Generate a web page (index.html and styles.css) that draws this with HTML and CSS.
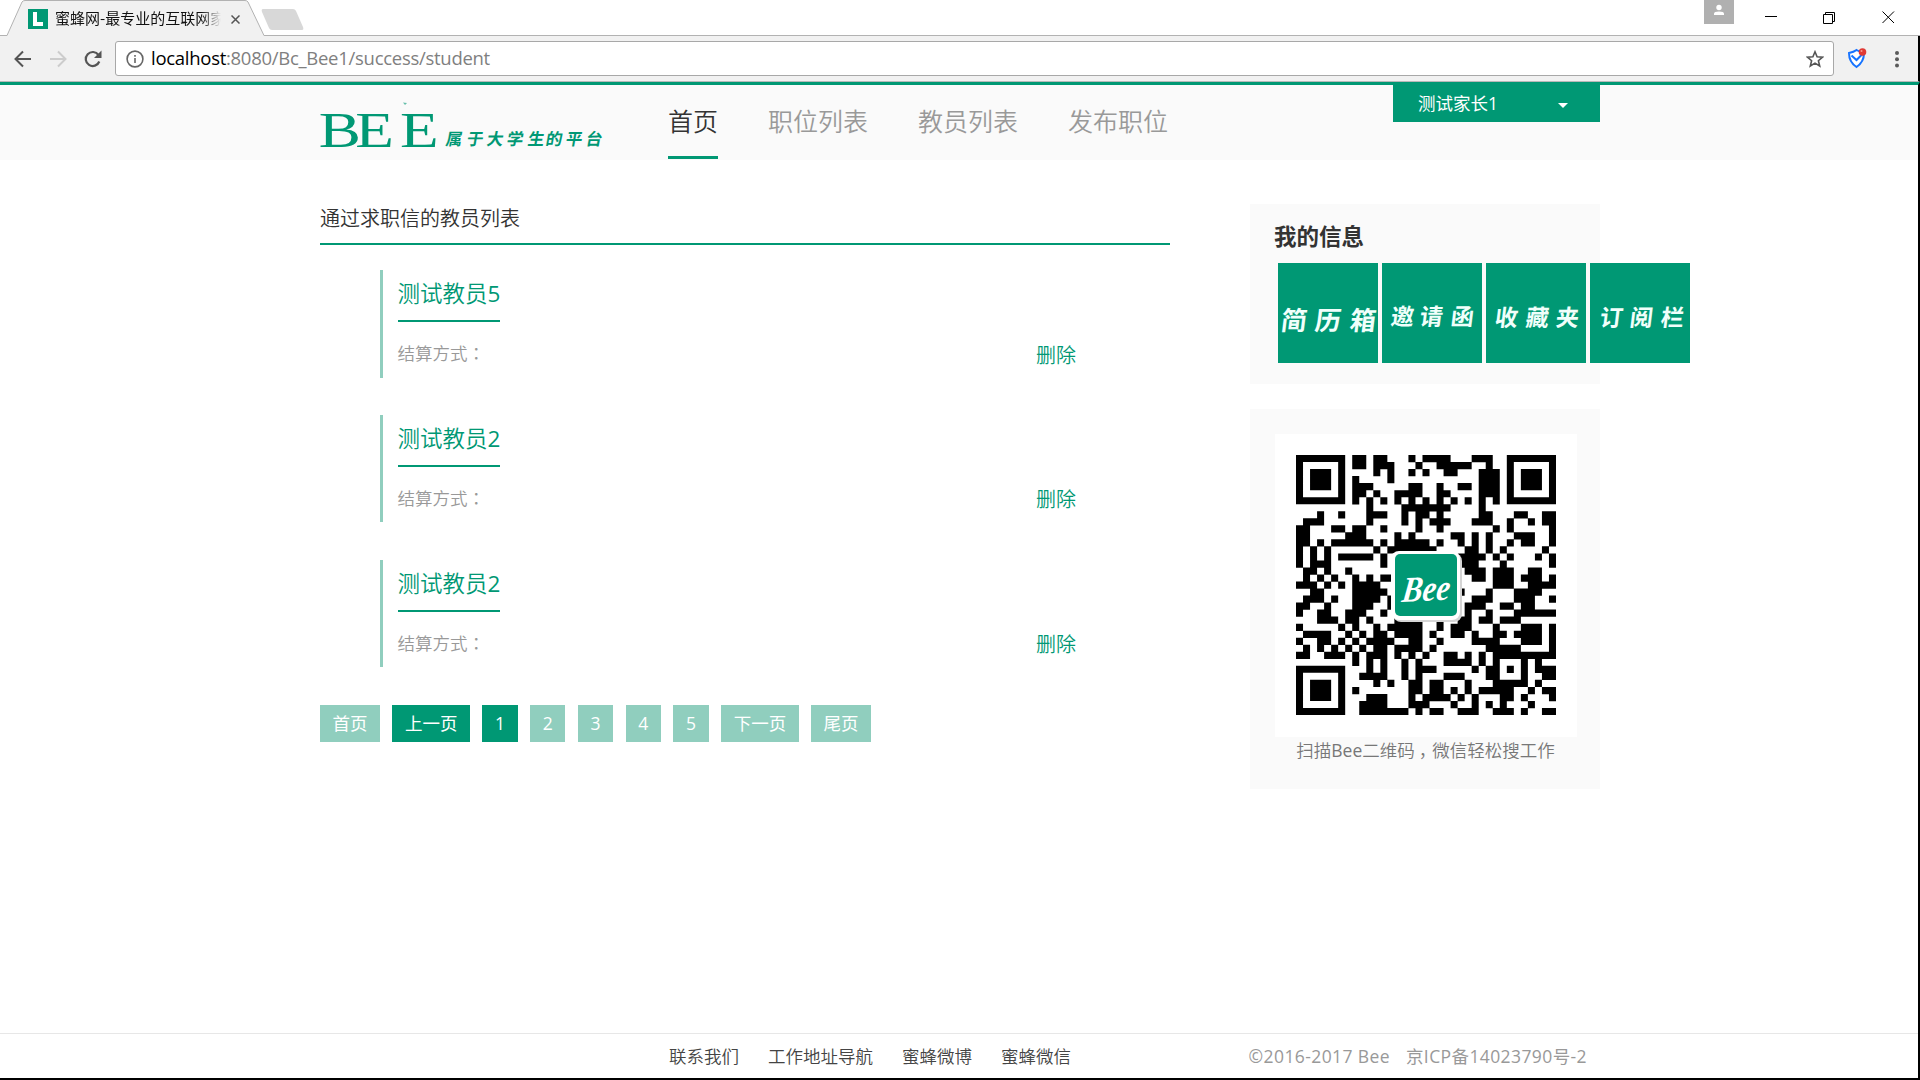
FILE: index.html
```html
<!DOCTYPE html>
<html lang="zh-CN">
<head>
<meta charset="utf-8">
<title>蜜蜂网</title>
<link rel="stylesheet" href="styles.css">
</head>
<body>
<div class="window">
  <div class="tabstrip">
    <svg class="tab-shape" width="320" height="36" viewBox="0 0 320 36">
      <path d="M0 36V35.5H7L22 2Q23 .5 25 .5H245Q247 .5 248 2L264 35.500H320V36Z" fill="#f1f1f1"/>
      <path d="M0 35.500H7L22 2Q23 .5 25 .5H245Q247 .5 248 2L264 35.500H320" fill="none" stroke="#b2b2b2"/>
      <path d="M263 9H293Q295 9 296 11L303 27Q304 30 302 30H272Q270 30 269 28L262 12Q261 9 263 9Z" fill="#d8d8d8"/>
    </svg>
    <svg class="favicon" width="20" height="20"><rect width="20" height="20" fill="#009874"/><path d="M5 3H9V13H15V17H5Z" fill="#fff"/></svg>
    <span class="tab-title">蜜蜂网-最专业的互联网家</span>
    <svg class="tab-close" width="9" height="9"><path d="M.5 .5L8.500 8.500M8.500 .5L.5 8.500" stroke="#555" stroke-width="1.500"/></svg>
    <svg class="profile" width="30" height="24"><rect width="30" height="24" fill="#b0b0b0"/><circle cx="15" cy="7.500" r="2.700" fill="#fff"/><path d="M10 15V13.500Q10 11.500 15 11.500T20 13.500V15Z" fill="#fff"/></svg>
    <svg class="controls" width="130" height="14" fill="none" stroke="#000">
      <path d="M0 5.500H12M58.500 3.500H67.500V12.500H58.500ZM60.500 3V1.500H69.500V10.500H68M117.500 .5L129 12M129 .5L117.500 12"/>
    </svg>
  </div>
  <div class="toolbar">
    <svg class="nav-icons" width="90" height="20" fill="none" stroke-width="2">
      <path d="M17 10H2M9 2.500L1.500 10L9 17.500" stroke="#555"/>
      <path d="M36 10H51M44 2.500L51.500 10L44 17.500" stroke="#ccc"/>
      <path d="M84.500 6A7 7 0 1 0 85.300 12.500" stroke="#555" stroke-width="2.200"/>
      <path d="M87.500 1.500V9H80Z" fill="#555"/>
    </svg>
    <div class="omnibox">
      <svg width="18" height="18" fill="none" stroke="#666" stroke-width="1.600"><circle cx="9" cy="9" r="7.900"/><path d="M9 8V13M9 5V6.700"/></svg>
      <span class="url"><b>localhost</b>:8080/Bc_Bee1/success/student</span>
      <svg class="star" width="18" height="18" fill="none" stroke="#555" stroke-width="1.600"><path d="M9 1.800L11.100 6.700L16.500 7.200L12.400 10.700L13.700 16L9 13.100L4.300 16L5.600 10.700L1.500 7.200L6.900 6.700Z"/></svg>
    </div>
    <svg class="shield" width="20" height="21"><path d="M2 5Q7 4 9.500 2Q13 4 17 5Q17 14 9.500 19Q2 14 2 5Z" fill="#fff" stroke="#1673ff" stroke-width="2"/><path d="M4.500 7.500L9.500 12L15 6.500" fill="none" stroke="#1673ff" stroke-width="2"/><circle cx="15.500" cy="4" r="3.800" fill="#e03a35"/><circle cx="14.500" cy="3" r="1" fill="#f59a90"/></svg>
    <svg class="dots" width="4" height="18" fill="#5a5a5a"><circle cx="2" cy="3" r="2"/><circle cx="2" cy="9.300" r="2"/><circle cx="2" cy="15.600" r="2"/></svg>
  </div>

  <div class="page">
    <header class="header">
      <div class="container header-row">
        <svg class="logo" width="285" height="60" fill="#009874">
          <text class="logo-latin" transform="scale(1.24 1)" x="-1 28.500 64.500" y="49">BEE</text>
          <path d="M83 4.500L87 5L85 7Z" opacity=".6"/>
          <text class="logo-cn" transform="translate(125 47) skewX(-10)" x="0 21 41 61 82 100 120 140" y="0">属于大学生的平台</text>
        </svg>
        <nav class="nav">
          <a class="active">首页</a><a>职位列表</a><a>教员列表</a><a>发布职位</a>
        </nav>
        <div class="user"><span>测试家长1</span><i class="caret"></i></div>
      </div>
    </header>

    <div class="container columns">
      <main class="main">
        <h2 class="list-title">通过求职信的教员列表</h2>
        <ul class="list">
          <li><div class="name"><a>测试教员<b>5</b></a></div><div class="meta"><span>结算方式<i class="punct" lang="zh-TW">：</i></span><a>删除</a></div></li>
          <li><div class="name"><a>测试教员<b>2</b></a></div><div class="meta"><span>结算方式<i class="punct" lang="zh-TW">：</i></span><a>删除</a></div></li>
          <li><div class="name"><a>测试教员<b>2</b></a></div><div class="meta"><span>结算方式<i class="punct" lang="zh-TW">：</i></span><a>删除</a></div></li>
        </ul>
        <div class="pager">
          <a class="w2">首页</a><a class="w3 on">上一页</a><a class="on">1</a><a>2</a><a>3</a><a>4</a><a>5</a><a class="w3">下一页</a><a class="w2">尾页</a>
        </div>
      </main>
      <aside class="side">
        <section class="card info">
          <h3>我的信息</h3>
          <div class="tiles">
            <svg width="100" height="100"><text class="brush big" transform="translate(2 67) skewX(-7)" x="0 34 69" y="0">简历箱</text></svg>
            <svg width="100" height="100"><text class="brush" transform="translate(8 62) skewX(-7)" x="0 29 60" y="0">邀请函</text></svg>
            <svg width="100" height="100"><text class="brush" transform="translate(8 63) skewX(-7)" x="0 31 61" y="0">收藏夹</text></svg>
            <svg width="100" height="100"><text class="brush" transform="translate(9 63) skewX(-7)" x="0 30 61" y="0">订阅栏</text></svg>
          </div>
        </section>
        <section class="card qr-card">
          <div class="qr">
            <svg width="260" height="260" viewBox="0 0 260 260">
              <path id="modules" transform="scale(7.027)"/>
              <rect x="97" y="98" width="69" height="69" rx="8" fill="#d5d5d5"/>
              <rect x="95" y="96" width="69" height="69" rx="8" fill="#fff"/>
              <rect x="99" y="99" width="62" height="62" rx="5" fill="#009874"/>
              <text class="qr-bee" transform="translate(105 147) rotate(-3) skewX(-10)" textLength="48" lengthAdjust="spacingAndGlyphs">Bee</text>
            </svg>
          </div>
          <p>扫描<b>Bee</b>二维码<i class="comma">，</i>微信轻松搜工作</p>
        </section>
      </aside>
    </div>

    <footer class="footer">
      <div class="container foot-row">
        <a>联系我们</a><a>工作地址导航</a><a>蜜蜂微博</a><a>蜜蜂微信</a>
        <span class="copy"><span>©2016-2017 Bee</span><span>京ICP备14023790号-2</span></span>
      </div>
    </footer>
  </div>
  <div class="taskbar"></div>
</div>
<script src="qr.js"></script>
</body>
</html>
```
FILE: styles.css
```css
* { box-sizing: border-box; margin: 0; padding: 0; }
body { width: 1920px; height: 1080px; overflow: hidden; background: #fff; font-family: "Open Sans", "Noto Sans CJK SC", sans-serif; font-weight: 350; color: #333; }
svg { display: block; flex: none; }
b { font-weight: 400; }
.window { display: flex; flex-direction: column; height: 1080px; }
.punct { font-style: normal; font-family: "Noto Sans CJK TC", sans-serif; }
.comma { font-style: normal; padding-left: 4px; margin-right: -4px; }

.tabstrip { position: relative; display: flex; height: 36px; border-bottom: 1px solid #b2b2b2; padding-left: 28px; }
.tab-shape { position: absolute; left: 0; top: 0; }
.favicon { position: relative; margin-top: 9px; }
.tab-title { position: relative; margin-left: 7px; width: 166px; overflow: hidden; white-space: nowrap; font-size: 15px; line-height: 35px; font-weight: 400; color: #111; font-family: "Noto Sans CJK SC", sans-serif; -webkit-mask-image: linear-gradient(90deg, #000 88%, transparent); mask-image: linear-gradient(90deg, #000 88%, transparent); }
.tab-close { position: relative; margin: 15px 0 0 10px; }
.profile { margin-left: auto; }
.controls { margin: 11px 25px 0 31px; }

.toolbar { display: flex; align-items: center; height: 46px; background: #f1f1f1; border-bottom: 1px solid #b9b9b9; padding-left: 14px; border-right: 2px solid #000; }
.nav-icons { margin-right: 11px; }
.omnibox { display: flex; align-items: center; width: 1719px; height: 35px; padding: 0 9px 0 10px; background: #fff; border: 1px solid #a8a8a8; border-radius: 3px; }
.url { margin-left: 7px; padding-bottom: 1px; font: 400 18.500px "Open Sans", sans-serif; line-height: 30px; color: #808080; letter-spacing: -.28px; }
.url b { color: #000; }
.star { margin-left: auto; }
.shield { margin-left: 13px; }
.dots { margin-left: 28px; }

.page { flex: 1; display: flex; flex-direction: column; border-top: 3px solid #009874; border-right: 2px solid #000; background: #fff; }
.container { width: 1280px; margin-left: 320px; display: flex; }
.header { height: 75px; background: #fafafa; }
.logo { margin-top: 13px; overflow: visible; }
.logo-latin { font: 400 51px "Liberation Serif", serif; }
.logo-cn { font: 700 16.500px "Noto Sans CJK SC", sans-serif; }
.nav { display: flex; gap: 50px; margin-left: 63px; height: 74px; }
.nav a { font-size: 25px; line-height: 72px; height: 74px; color: #999; white-space: nowrap; }
.nav .active { color: #333; border-bottom: 3px solid #009874; }
.user { display: flex; align-items: center; margin-left: auto; width: 207px; height: 37px; padding: 0 32px 0 25px; background: #009874; color: #fff; font-size: 17.500px; font-weight: 400; justify-content: space-between; }
.user span { padding-bottom: 2px; }
.caret { border: 5px solid transparent; border-top-color: #fff; border-bottom: 0; margin-top: 4px; }

.columns { justify-content: space-between; flex: 1; }
.main { width: 850px; padding-top: 38px; }
.list-title { height: 47px; border-bottom: 2px solid #009874; font-size: 20px; line-height: 41px; font-weight: 350; }
.list { list-style: none; margin: 25px 0 0 60px; }
.list li { height: 107.500px; margin-bottom: 37.400px; padding-left: 14.500px; border-left: 3px solid #90cebe; }
.name { height: 52px; display: flex; }
.name a { height: 52px; border-bottom: 2px solid #009874; font-size: 22.500px; line-height: 48px; color: #009874; }
.meta { display: flex; align-items: center; height: 64px; }
.meta span { width: 638.500px; padding-bottom: 3px; font-size: 17.500px; color: #999; }
.meta a { font-size: 20px; color: #009874; }
.pager { display: flex; gap: 12.400px; }
.pager a { width: 35.400px; height: 37px; line-height: 36px; text-align: center; background: #90cebe; color: #fff; font-size: 17.500px; font-weight: 400; }
.pager .w2 { width: 60px; }
.pager .w3 { width: 77.500px; }
.pager .on { background: #009874; }

.side { width: 350px; padding-top: 44px; }
.card { background: #fafafa; }
.info { height: 180px; padding: 16px 0 0 24px; }
.info h3 { font-size: 22.500px; line-height: 34px; font-weight: 700; }
.tiles { display: flex; gap: 4px; margin: 9px 0 0 4px; }
.tiles svg { background: #009874; }
.brush { font: 700 23px "Noto Sans CJK SC", sans-serif; fill: #f0fffb; }
.big { font-size: 26px; }
.qr-card { height: 380px; margin-top: 25px; padding: 25px 23px 0 25px; }
.qr { width: 302px; height: 303px; padding: 21px; background: #fff; }
.qr-bee { font: italic 700 36px "Liberation Serif", serif; fill: #fff; }
.qr-card p { margin-left: -1px; text-align: center; font-size: 17.500px; line-height: 26px; color: #777; white-space: nowrap; }

.footer { height: 45px; border-top: 1px solid #e7e7e7; font-size: 17.500px; line-height: 44px; }
.foot-row { padding-left: 349px; gap: 29px; color: #444; white-space: nowrap; }
.copy { display: flex; gap: 16px; margin-left: auto; margin-right: 13px; color: #999; font-weight: 400; letter-spacing: .4px; }
.taskbar { height: 2px; background: #000; }
```
FILE: qr.js
```js
// Each row lists the dark module runs; the three corner finders are added below.
const rows = [
  "8-9,11-12,16,18-21,25-27", "8-9,11-13,17,20-24,27", "11,13,16,18,21-22,26-28",
  "8,13,26-28", "8-10,16-17,20,23-24,26-28", "8-9,11,14-17,20-21,26-28",
  "8,10,12,14,16,18,20,22,24,26,28", "10,15-21,26", "3,6,10-12,15,17-18,20,26-27,31-32,35-36",
  "1-3,10,15,17,19-21,25-27,30,33,35-36", "0-1,5-6,8-9,12,17,20,28,30,36", "0-1,7-9,14,16,22-23,25,27,31-33,36",
  "0-1,3,5-10,12,14-17,18,20,23,25,27,30,32-33,36", "0,2,4,11,13-19,24-25,27,29,35", "0,2,4,6-10,12,23-26,28,30,34,36",
  "0,2-4,12,23-25,29,36", "1-2,4,7,24-26,28-30,33-34", "1,3,5,8,10,12-13,25-26,28-30,32-34,36",
  "0-2,4,6,8,9-11,28-30,33-36", "2-3,8-11,12,23,27,31-34", "1-3,5,8-10,11,13,25-27,31-33,36",
  "0-1,4,8-10,13,24-26,29-30,32-33", "0,3-4,7-9,12,24,27,31-36", "3-5,7-8,10,14-17,20,23-24,26-27,29-31",
  "0,6,8,11,13-17,20,22-24,28,32-34,36", "1-4,7,9,11-12,14-17,19,22-23,25,28-29,31-34,36",
  "0,3-4,6,8,10-13,16-17,20,25-28,32-34,36", "1,3,5,7,9,11-12,14-17,19,27-31,36", "0-1,4-6,8,10-12,14,16,18,21-22,24,26,28-36",
  "8,10,12,15,17,21-24,26,28,32,34", "10,12,15,17-19,25,27-28,30,32,34-36", "9-12,15,17,21-23,27-28,32,35-36",
  "11,13,16-17,19-20,24,28-32,34", "8,16-17,19-20,22,24,26-30,33,35-36", "10-12,16,18-21,23,25,29-30,32,36",
  "9-12,16-18,22,25,27,29,33", "9-15,17,19-20,23-25,28-30,32,35-36"
];
let d = "";
rows.forEach((row, y) => row.split(",").forEach(run => {
  const [a, b = a] = run.split("-").map(Number);
  d += `M${a} ${y}h${b - a + 1}v1.03H${a}z`;
}));
[[0, 0], [30, 0], [0, 30]].forEach(([x, y]) => {
  d += `M${x} ${y}h7v7h-7zM${x + 1} ${y + 1}v5h5v-5zM${x + 2} ${y + 2}h3v3h-3z`;
});
document.getElementById("modules").setAttribute("d", d);
```
